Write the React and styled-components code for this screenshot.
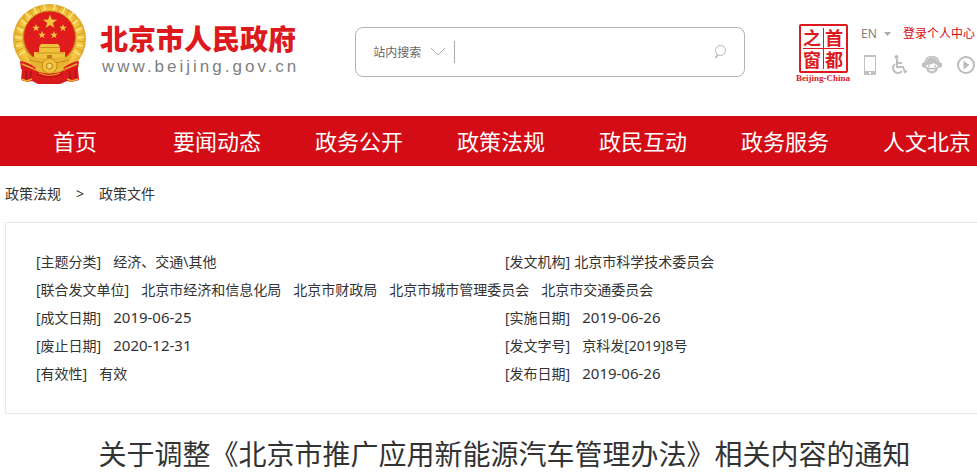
import React from "react";
import styled, { createGlobalStyle } from "styled-components";

const GlobalStyle = createGlobalStyle`
  *, *::before, *::after { box-sizing: border-box; }
  body {
    margin: 0;
    background: #fff;
    color: #333;
    font-family: "Noto Sans", "Noto Sans CJK SC", sans-serif;
    font-size: 14px;
    overflow-x: hidden;
  }
  a { color: inherit; text-decoration: none; }
`;

const Header = styled.header`
  display: flex;
  align-items: flex-start;
  height: 116px;
  padding: 0 2px 0 12px;
`;

const Brand = styled.a`
  display: flex;
  gap: 12px;
  flex: none;
  padding-top: 3px;
`;

const BrandText = styled.span`
  display: flex;
  flex-direction: column;
  padding-top: 22px;
`;

const BrandName = styled.strong`
  color: #dc1a1d;
  font: 900 28px/32px "Liberation Sans", "Noto Sans CJK SC", sans-serif;
  white-space: nowrap;
`;

const BrandHost = styled.span`
  padding-left: 2px;
  color: #808080;
  font: 17px/20px "Liberation Sans", sans-serif;
  letter-spacing: 3px;
`;

const Search = styled.form`
  display: flex;
  align-items: center;
  flex: 1;
  min-width: 0;
  height: 50px;
  margin: 27px 51px 0 56px;
  padding: 0 16px 0 17px;
  border: 1px solid #b3b3b3;
  border-radius: 8px;
`;

const Scope = styled.button`
  display: flex;
  align-items: center;
  gap: 9px;
  padding: 0 8px 0 0;
  border: 0;
  background: none;
  color: #666;
  font: 12px/20px "Noto Sans CJK SC", sans-serif;
  white-space: nowrap;
`;

const SearchInput = styled.input`
  flex: 1;
  min-width: 0;
  height: 22px;
  padding: 0 8px;
  border: 0;
  border-left: 1px solid #aaa;
  outline: 0;
  background: none;
  font: inherit;
`;

const IconButton = styled.button`
  display: flex;
  padding: 0;
  border: 0;
  background: none;
`;

const SealLink = styled.a`
  display: flex;
  flex-direction: column;
  align-items: center;
  flex: none;
  width: 54px;
  padding-top: 24px;
  color: #dc1a1d;
`;

const SealBox = styled.span`
  display: grid;
  grid-template-columns: 1fr 1fr;
  grid-auto-rows: 22px;
  column-gap: 1px;
  width: 49px;
  height: 49px;
  padding: 2px 1px 0;
  border: 2px solid #dc1a1d;
  border-radius: 2px;
  background: linear-gradient(#dc1a1d, #dc1a1d) center / 1px 41px no-repeat,
    linear-gradient(#dc1a1d, #dc1a1d) center / 41px 1px no-repeat;
  font: bold 18px/22px "Liberation Sans", "Noto Sans CJK SC", sans-serif;
  text-align: center;
`;

const SealCaption = styled.span`
  font: bold 9px/10px "Liberation Serif", serif;
  white-space: nowrap;
`;

const Tools = styled.div`
  display: flex;
  flex-direction: column;
  flex: none;
  gap: 11px;
  width: 114px;
  margin-left: 11px;
  padding-top: 24px;
`;

const ToolRow = styled.div`
  display: flex;
  align-items: center;
  justify-content: space-between;
  height: 20px;
  font-size: 12px;
`;

const Language = styled.button`
  display: flex;
  align-items: center;
  gap: 7px;
  padding: 0;
  border: 0;
  background: none;
  color: #808080;
  font: 12px/20px "Noto Sans", sans-serif;
`;

const Login = styled.a`
  && { color: #d10d16; }
  font-size: 12px;
  line-height: 20px;
`;

const ToolIcons = styled.div`
  display: flex;
  align-items: center;
  justify-content: space-between;
  padding-left: 3px;
`;

const Nav = styled.nav`
  display: flex;
  height: 50px;
  padding-left: 4px;
  overflow: hidden;
  background: #d30c15;
`;

const NavLink = styled.a`
  flex: 0 0 142px;
  && { color: #fff; }
  font-size: 22px;
  line-height: 50px;
  text-align: center;
  white-space: nowrap;
`;

const Crumbs = styled.nav`
  display: flex;
  gap: 15px;
  padding: 18px 5px 18px;
  line-height: 20px;
`;

const Panel = styled.dl`
  display: grid;
  grid-template-columns: 1fr 1fr;
  margin: 0 0 0 5px;
  padding: 25px 3px 25px 30px;
  border: 1px solid #e9e9e0;
  border-right: 0;
`;

const Field = styled.div`
  display: flex;
  align-items: baseline;
  gap: ${(p) => (p.$tight ? 4 : 12)}px;
  grid-column: ${(p) => (p.$wide ? "1 / -1" : "auto")};
  height: 28px;
  line-height: 28px;
  white-space: nowrap;
`;

const Value = styled.dd`
  display: flex;
  gap: 12px;
  margin: 0;
  font-size: ${(p) => (p.$date ? 15 : 14)}px;
  line-height: 24px;
`;

const Title = styled.h1`
  margin: 0;
  padding: 19px 0 0 32px;
  font-size: 28px;
  font-weight: 400;
  line-height: 42px;
  text-align: center;
  white-space: nowrap;
`;

const STAR = "M0-1 .24-.32 .95-.31 .38.12 .59.81 0 .4-.59.81-.38.12-.95-.31-.24-.32Z";
const STARS = [
  [38, 19, 7.5],
  [24, 25, 4],
  [51, 25, 4],
  [30, 32, 4],
  [42, 32, 4],
];

function Emblem() {
  return (
    <svg width="76" height="84" viewBox="0 0 76 84" aria-hidden="true">
      <defs>
        <radialGradient id="gold" cx="50%" cy="50%" r="50%">
          <stop offset=".68" stopColor="#d59a1c" />
          <stop offset=".78" stopColor="#f7cf48" />
          <stop offset=".9" stopColor="#f0bf38" />
          <stop offset="1" stopColor="#dba62a" />
        </radialGradient>
      </defs>
      <path d="M11 56 9 77l6 2 5-1 6 3h22l7-3 5 1 7-2-2-21Z" fill="#d8191b" />
      <path d="m15 64-1 13m6-12-2 11m39-11 2 11m4-12 1 13" stroke="#a11115" />
      <ellipse cx="37.500" cy="36" rx="36.500" ry="35" fill="url(#gold)" />
      <path
        d="M9 17l5 4M5 25l6 3M3 34l7 1M4 43l6-1M7 52l6-4M14 10l4 5M22 5l3 6M66 17l-5 4M70 25l-6 3M72 34l-7 1M71 43l-6-1M68 52l-6-4M61 10l-4 5M53 5l-3 6M32 2l1 5M43 2l-1 5"
        stroke="#fce58c"
        strokeWidth="1.500"
      />
      <path
        d="M11 14l4 5M6 22l6 3M3 30l7 2M3 39l7-1M5 48l6-3M18 7l3 6M64 14l-4 5M69 22l-6 3M72 30l-7 2M72 39l-7-1M70 48l-6-3M57 7l-3 6M27 3l2 6M48 3l-2 6"
        stroke="#d39a23"
      />
      <circle cx="37.500" cy="34" r="26" fill="#e01b1b" stroke="#c28619" />
      {STARS.map(([x, y, r]) => (
        <path key={`${x}-${y}`} d={STAR} transform={`translate(${x} ${y}) scale(${r})`} fill="#f2c53d" />
      ))}
      <path d="M29 41h17l2 3H27Zm-2 4h21v4h5v6H22v-6h5Z" fill="#f0c23c" />
      <path d="M27 44.500h21M24 50h28" stroke="#c98f20" />
      <path d="M35 55v-3h5v3Z" fill="#c07b17" />
      <path d="M14 52c7 3 15 3 23.500 3S54 55 61 52l-5 9-9 5H28l-9-5Z" fill="#e7b330" />
      <path d="M18 57c13 4 26 4 39 0" stroke="#c58a19" fill="none" />
      <path d="M8 58c7 1 12 4 16 7-4 4-10 4-15 1Zm59 0c-7 1-12 4-16 7 4 4 10 4 15 1Z" fill="#dc1c1c" />
      <path d="m10 61 12 5m43-5-12 5M9 76l6 2 5-2m46 0-6 2-5-2" stroke="#e7b32e" strokeWidth="1.500" fill="none" />
      <circle cx="37.500" cy="63" r="7.500" fill="#efc23e" stroke="#c88b18" />
      <circle cx="37.500" cy="63" r="3" fill="#f8d968" stroke="#b77b12" />
      <path d="M23 67c7 5 22 5 29 0l4 8c-12 5-25 5-37 0Z" fill="#dc1c1c" />
      <path d="M24 71c9 4 18 4 27 0" stroke="#b31316" fill="none" />
      <path d="M27 70c6 3 15 3 21 0" stroke="#e4ad2c" fill="none" />
    </svg>
  );
}

const SearchGlyph = () => (
  <svg width="14" height="16" viewBox="0 0 14 16" fill="none" stroke="#b5b5b5" aria-hidden="true">
    <circle cx="6.500" cy="6.500" r="5" />
    <path d="m3.500 11-2 3" strokeWidth="1.500" />
  </svg>
);

const PhoneGlyph = () => (
  <svg width="12" height="20" viewBox="0 0 12 20" aria-hidden="true">
    <path fill="#c1c1c1" fillRule="evenodd" d="M0 0h12v20H0Zm1 2v14h10V2Zm4 15v2h2v-2Z" />
  </svg>
);

const WheelchairGlyph = () => (
  <svg width="16" height="20" viewBox="0 0 16 20" fill="none" stroke="#bebebe" strokeWidth="2" aria-hidden="true">
    <circle cx="5.500" cy="2" r="2" fill="#bebebe" stroke="none" />
    <path d="M6 4v8h6l2 5 2-1M6 8h5" />
    <path d="M4 9a5 5 0 1 0 7 7" />
  </svg>
);

const ServiceGlyph = () => (
  <svg width="20" height="18" viewBox="0 0 20 18" aria-hidden="true">
    <path d="M3 6C4-1 16-1 17 6" fill="none" stroke="#c1c1c1" strokeWidth="1.500" />
    <path d="M4 6c1-6 11-6 12 0l4 1v4l-4 1c-1 7-11 7-12 0l-4-1V7Z" fill="#c1c1c1" />
    <path d="M4.500 9c3 0 6-1 7.500-2 1 1 2 2 3.500 2v2c-2 1-9 1-11 0Z" fill="#fff" />
    <path d="M6 10h2m4 0h2" stroke="#aaa" />
    <path d="M7 13c2 1 4 1 6 0-1 3-5 3-6 0Z" fill="#fff" />
  </svg>
);

const PlayGlyph = () => (
  <svg width="18" height="18" viewBox="0 0 18 18" aria-hidden="true">
    <circle cx="9" cy="9" r="8" fill="none" stroke="#bcbcbc" strokeWidth="2" />
    <path d="m6.500 4.500 6 4.500-6 4.500Z" fill="#bcbcbc" />
  </svg>
);

const TOOLS = [
  ["手机版", PhoneGlyph],
  ["无障碍", WheelchairGlyph],
  ["智能问答", ServiceGlyph],
  ["视频", PlayGlyph],
];

const NAV = ["首页", "要闻动态", "政务公开", "政策法规", "政民互动", "政务服务", "人文北京"];

const FIELDS = [
  { label: "主题分类", values: ["经济、交通\\其他"] },
  { label: "发文机构", values: ["北京市科学技术委员会"], tight: true },
  {
    label: "联合发文单位",
    values: ["北京市经济和信息化局", "北京市财政局", "北京市城市管理委员会", "北京市交通委员会"],
    wide: true,
  },
  { label: "成文日期", values: ["2019-06-25"], date: true },
  { label: "实施日期", values: ["2019-06-26"], date: true },
  { label: "废止日期", values: ["2020-12-31"], date: true },
  { label: "发文字号", values: ["京科发[2019]8号"] },
  { label: "有效性", values: ["有效"] },
  { label: "发布日期", values: ["2019-06-26"], date: true },
];

export default function App() {
  return (
    <>
      <GlobalStyle />
      <Header>
        <Brand href="#">
          <Emblem />
          <BrandText>
            <BrandName>北京市人民政府</BrandName>
            <BrandHost>www.beijing.gov.cn</BrandHost>
          </BrandText>
        </Brand>
        <Search role="search" onSubmit={(e) => e.preventDefault()}>
          <Scope type="button">
            站内搜索
            <svg width="16" height="10" viewBox="0 0 16 10" fill="none" stroke="#b0b0b0" aria-hidden="true">
              <path d="m1 1 7 7 7-7" />
            </svg>
          </Scope>
          <SearchInput type="search" aria-label="站内搜索" />
          <IconButton type="submit" aria-label="搜索">
            <SearchGlyph />
          </IconButton>
        </Search>
        <SealLink href="#">
          <SealBox>
            <span>之</span>
            <span>首</span>
            <span>窗</span>
            <span>都</span>
          </SealBox>
          <SealCaption>Beijing-China</SealCaption>
        </SealLink>
        <Tools>
          <ToolRow>
            <Language type="button">
              EN
              <svg width="7" height="4" viewBox="0 0 7 4" aria-hidden="true">
                <path d="M0 0h7L3.500 4Z" fill="#aaa" />
              </svg>
            </Language>
            <Login href="#">登录个人中心</Login>
          </ToolRow>
          <ToolIcons>
            {TOOLS.map(([label, Glyph]) => (
              <IconButton key={label} type="button" aria-label={label}>
                <Glyph />
              </IconButton>
            ))}
          </ToolIcons>
        </Tools>
      </Header>
      <Nav aria-label="主导航">
        {NAV.map((item) => (
          <NavLink key={item} href="#">{item}</NavLink>
        ))}
      </Nav>
      <main>
        <Crumbs aria-label="当前位置">
          <a href="#">政策法规</a>
          <span>&gt;</span>
          <a href="#">政策文件</a>
        </Crumbs>
        <Panel>
          {FIELDS.map(({ label, values, wide, tight, date }) => (
            <Field key={label} $wide={wide} $tight={tight}>
              <dt>[{label}]</dt>
              <Value $date={date}>
                {values.map((value) => (
                  <span key={value}>{value}</span>
                ))}
              </Value>
            </Field>
          ))}
        </Panel>
        <Title>关于调整《北京市推广应用新能源汽车管理办法》相关内容的通知</Title>
      </main>
    </>
  );
}
